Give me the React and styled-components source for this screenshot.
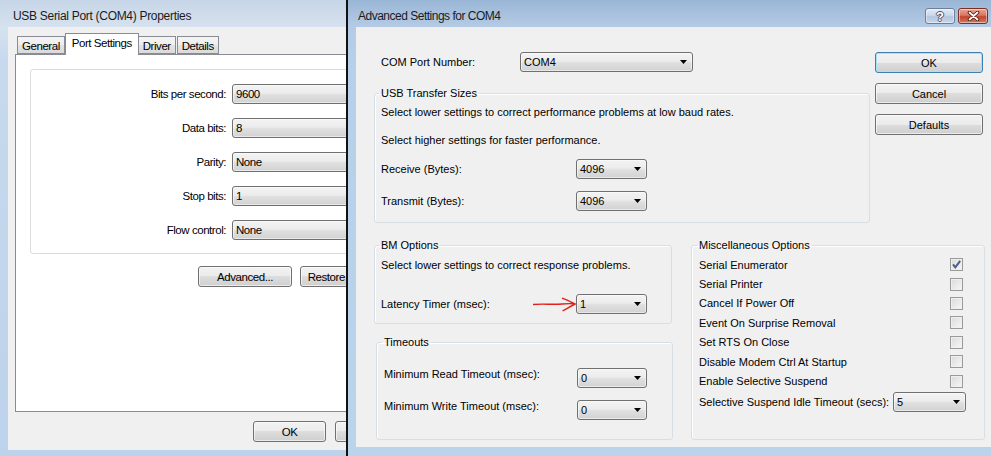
import React from "react";
import styled, { createGlobalStyle } from "styled-components";

const FONT = `"Liberation Sans", Arial, sans-serif`;

const GlobalStyle = createGlobalStyle`
  html, body { margin: 0; padding: 0; }
  body { font-family: ${FONT}; background: #b9d1ea; color: #000; }
  * { box-sizing: border-box; }
`;

const Desktop = styled.div`
  position: relative;
  width: 991px;
  height: 456px;
  overflow: hidden;
  background: #b9d1ea;
`;

const Window = styled.div`
  position: absolute;
  top: 0;
  left: ${(p) => p.$left}px;
  width: ${(p) => p.$width}px;
  height: 456px;
  z-index: ${(p) => p.$z};
  display: flex;
  flex-direction: column;
  padding: 0 8px ${(p) => p.$bottom}px 8px;
  border-left: ${(p) => (p.$active ? "2px solid #111" : "none")};
  background: ${(p) =>
    p.$active
      ? "linear-gradient(to bottom, #9ab6d6 0px, #b5cbe5 27px, #b8cfe9 60px, #bcd3ec 100%)"
      : "linear-gradient(to bottom, #c6d5e7 0px, #d6e2ef 27px, #c6d9ee 60px, #bdd3eb 100%)"};
`;

const TitleBar = styled.div`
  height: 27px;
  flex-shrink: 0;
  display: flex;
  align-items: flex-start;
  justify-content: space-between;
  padding-left: ${(p) => p.$pad}px;
`;

const TitleText = styled.div`
  margin-top: 9px;
  font-size: 12px;
  line-height: 14px;
  letter-spacing: ${(p) => p.$spacing}px;
  color: #1b1b1b;
  white-space: nowrap;
`;

const CaptionButtons = styled.div`
  display: flex;
  gap: 3px;
  margin: 8px 3px 0 0;
`;

const CaptionButton = styled.div`
  width: 30px;
  height: 16px;
  border-radius: 3px;
  display: flex;
  align-items: center;
  justify-content: center;
  border: 1px solid ${(p) => (p.$close ? "#7a3125" : "#6b7f9c")};
  background: ${(p) =>
    p.$close
      ? "linear-gradient(#e9a595 0%, #d87561 45%, #c4442d 55%, #d27a60 100%)"
      : "linear-gradient(#e2eaf4 0%, #cad8e8 45%, #b3c6de 55%, #c6d6ea 100%)"};
  box-shadow: inset 0 0 0 1px rgba(255, 255, 255, 0.45);
`;

const HelpGlyph = styled.span`
  font-family: ${FONT};
  font-weight: bold;
  font-size: 13px;
  line-height: 13px;
  color: #fff;
  text-shadow: -1px 0 #3d5272, 1px 0 #3d5272, 0 -1px #3d5272, 0 1px #3d5272;
`;

/* ---------- Left window ---------- */

const LeftClient = styled.div`
  flex: 1;
  display: flex;
  flex-direction: column;
  background: #f0f0f0;
  padding: 6px 7px 8px 7px;
  font-size: 11.5px;
  letter-spacing: -0.45px;
`;

const TabStrip = styled.div`
  display: flex;
  align-items: flex-end;
  height: 21px;
  padding-left: 2px;
  position: relative;
  z-index: 1;
`;

const Tab = styled.div`
  height: ${(p) => (p.$active ? 22 : 18)}px;
  margin: ${(p) => (p.$active ? "0 -1px -1px -1px" : "0 1px 0 0")};
  padding: ${(p) => (p.$active ? "2px 6px 0" : "2px 4px 0")};
  border: 1px solid #898c95;
  border-bottom: ${(p) => (p.$active ? "none" : "1px solid #898c95")};
  background: ${(p) =>
    p.$active ? "#fff" : "linear-gradient(#f4f4f4 0%, #eeeeee 50%, #e4e4e4 50%, #dadada 100%)"};
  line-height: 14px;
  white-space: nowrap;
  position: relative;
  z-index: ${(p) => (p.$active ? 2 : 1)};
`;

const TabPanel = styled.div`
  flex: 1;
  background: #fff;
  border: 1px solid #898c95;
  padding: 14px 14px 0 14px;
  display: flex;
  flex-direction: column;
`;

const PlainGroup = styled.div`
  height: 185px;
  border: 1px solid #dcdcdc;
  border-radius: 3px;
  padding-top: 14px;
  display: flex;
  flex-direction: column;
  gap: 14px;
`;

const SettingRow = styled.div`
  display: flex;
  align-items: center;
  height: 20px;
  gap: 6px;
`;

const SettingLabel = styled.div`
  width: 195px;
  text-align: right;
  white-space: nowrap;
`;

const ButtonRow = styled.div`
  display: flex;
  justify-content: flex-end;
  gap: ${(p) => p.$gap}px;
  margin-top: ${(p) => p.$top}px;
  padding-right: ${(p) => p.$right || 0}px;
`;

/* ---------- Shared controls ---------- */

const Button = styled.div`
  width: ${(p) => p.$w}px;
  height: 21px;
  flex-shrink: 0;
  display: flex;
  align-items: center;
  justify-content: center;
  border: 1px solid ${(p) => (p.$default ? "#3c7fb1" : "#707070")};
  border-radius: 3px;
  background: linear-gradient(#f2f2f2 0%, #ebebeb 50%, #dddddd 50%, #cfcfcf 100%);
  box-shadow: inset 0 0 0 1px ${(p) => (p.$default ? "#a6e3f8" : "rgba(255,255,255,0.6)")};
  white-space: nowrap;
`;

const ComboBox = styled.div`
  width: ${(p) => p.$w}px;
  height: 20px;
  flex-shrink: 0;
  display: flex;
  align-items: center;
  justify-content: space-between;
  padding: 0 5px 0 3px;
  border: 1px solid #707070;
  border-radius: 3px;
  background: linear-gradient(#f3f3f3 0%, #ececec 45%, #dfdfdf 55%, #d2d2d2 100%);
  box-shadow: inset 0 0 0 1px rgba(255, 255, 255, 0.5);
  white-space: nowrap;
`;

const Arrow = () => (
  <svg width="7" height="4" viewBox="0 0 7 4">
    <polygon points="0,0 7,0 3.5,4" fill="#000" />
  </svg>
);

const Combo = ({ w, value, arrow = true }) => (
  <ComboBox $w={w}>
    <span>{value}</span>
    {arrow && <Arrow />}
  </ComboBox>
);

/* ---------- Right window ---------- */

const RightClient = styled.div`
  flex: 1;
  display: flex;
  flex-direction: column;
  background: #f0f0f0;
  padding: 25px 8px 0 17px;
  font-size: 11px;
`;

const TopSection = styled.div`
  display: flex;
  gap: 5px;
`;

const MainColumn = styled.div`
  width: 497px;
  display: flex;
  flex-direction: column;
`;

const ButtonColumn = styled.div`
  width: 108px;
  display: flex;
  flex-direction: column;
  gap: 10px;
`;

const PortRow = styled.div`
  display: flex;
  align-items: center;
  height: 20px;
`;

const PortLabel = styled.div`
  width: 147px;
  padding-left: 8px;
`;

const GroupBox = styled.fieldset`
  margin: ${(p) => p.$margin || "0"};
  min-width: 0;
  width: ${(p) => (p.$w ? `${p.$w}px` : "auto")};
  border: 1px solid #d5dfe5;
  border-radius: 3px;
  padding: 0 ${(p) => p.$padRight ?? 6}px ${(p) => p.$padBottom}px ${(p) => p.$padLeft ?? 6}px;
  box-shadow: inset 1px 1px 0 #fff;
`;

const Legend = styled.legend`
  padding: 0 2px;
  margin-left: -2px;
  line-height: 14px;
  font-size: 11px;
`;

const Text = styled.div`
  line-height: 14px;
  margin-top: ${(p) => p.$top}px;
  white-space: nowrap;
`;

const FieldRow = styled.div`
  display: flex;
  align-items: ${(p) => (p.$raised ? "flex-start" : "center")};
  height: 20px;
  margin-top: ${(p) => p.$top}px;
`;

const FieldLabel = styled.div`
  width: ${(p) => p.$w}px;
  line-height: ${(p) => (p.$raised ? "12px" : "14px")};
  white-space: nowrap;
`;

const BottomSection = styled.div`
  display: grid;
  grid-template-columns: 299px 294px;
  column-gap: 18px;
  margin: 15px -2px 0 1px;
`;

const StackColumn = styled.div`
  display: flex;
  flex-direction: column;
`;

const OptionList = styled.div`
  margin-top: 3px;
  display: flex;
  flex-direction: column;
`;

const OptionRow = styled.div`
  height: 19.4px;
  display: flex;
  align-items: center;
  justify-content: space-between;
  white-space: nowrap;
`;

const ComboRow = styled.div`
  margin-top: 1px;
  height: 20px;
  display: flex;
  align-items: center;
  justify-content: space-between;
  white-space: nowrap;
`;

const CheckBox = styled.span`
  width: 13px;
  height: 13px;
  flex-shrink: 0;
  margin-right: 3px;
  border: 1px solid #9a9a9a;
  background: linear-gradient(135deg, #dadada 0%, #f7f7f7 100%);
  box-shadow: inset 0 0 0 1px #efefef;
  display: flex;
  align-items: center;
  justify-content: center;
`;

const Check = ({ checked }) => (
  <CheckBox>
    {checked && (
      <svg width="11" height="11" viewBox="0 0 11 11">
        <path d="M2 5.4 L4.3 8.3 L9.2 1.8" fill="none" stroke="#4a5f92" strokeWidth="2" />
      </svg>
    )}
  </CheckBox>
);

const RedArrow = () => (
  <svg width="44" height="16" viewBox="0 0 44 16" style={{ flexShrink: 0 }}>
    <path d="M1 8.5 C10 7.5 20 8.8 30 8 S38 7.6 43 8" fill="none" stroke="#e3201b" strokeWidth="1.4" />
    <path d="M30 2.2 C35 4 39 6 43 8 C39 10 35 12.5 30.5 15" fill="none" stroke="#e3201b" strokeWidth="1.4" />
  </svg>
);

const options = [
  ["Serial Enumerator", true],
  ["Serial Printer", false],
  ["Cancel If Power Off", false],
  ["Event On Surprise Removal", false],
  ["Set RTS On Close", false],
  ["Disable Modem Ctrl At Startup", false],
  ["Enable Selective Suspend", false],
];

const portSettings = [
  ["Bits per second:", "9600"],
  ["Data bits:", "8"],
  ["Parity:", "None"],
  ["Stop bits:", "1"],
  ["Flow control:", "None"],
];

export default function App() {
  return (
    <>
      <GlobalStyle />
      <Desktop>
        <Window $left={0} $width={424} $z={1} $bottom={6}>
          <TitleBar $pad={5}>
            <TitleText $spacing={-0.3}>USB Serial Port (COM4) Properties</TitleText>
          </TitleBar>
          <LeftClient>
            <TabStrip>
              <Tab>General</Tab>
              <Tab $active>Port Settings</Tab>
              <Tab>Driver</Tab>
              <Tab>Details</Tab>
            </TabStrip>
            <TabPanel>
              <PlainGroup>
                {portSettings.map(([label, value]) => (
                  <SettingRow key={label}>
                    <SettingLabel>{label}</SettingLabel>
                    <Combo w={150} value={value} />
                  </SettingRow>
                ))}
              </PlainGroup>
              <ButtonRow $gap={8} $top={12}>
                <Button $w={94}>Advanced...</Button>
                <Button $w={94}>Restore Defaults</Button>
              </ButtonRow>
            </TabPanel>
            <ButtonRow $gap={9} $top={9} $right={1}>
              <Button $w={73}>OK</Button>
              <Button $w={73}>Cancel</Button>
            </ButtonRow>
          </LeftClient>
        </Window>

        <Window $left={346} $width={653} $z={2} $bottom={9} $active>
          <TitleBar $pad={2}>
            <TitleText $spacing={-0.5}>Advanced Settings for COM4</TitleText>
            <CaptionButtons>
              <CaptionButton>
                <HelpGlyph>?</HelpGlyph>
              </CaptionButton>
              <CaptionButton $close>
                <svg width="13" height="10" viewBox="0 0 13 10">
                  <path d="M2.5 1.5 L10.5 8.5 M10.5 1.5 L2.5 8.5" stroke="#4a1a12" strokeWidth="3.6" strokeLinecap="round" />
                  <path d="M2.5 1.5 L10.5 8.5 M10.5 1.5 L2.5 8.5" stroke="#fff" strokeWidth="1.8" strokeLinecap="round" />
                </svg>
              </CaptionButton>
            </CaptionButtons>
          </TitleBar>
          <RightClient>
            <TopSection>
              <MainColumn>
                <PortRow>
                  <PortLabel>COM Port Number:</PortLabel>
                  <Combo w={173} value="COM4" />
                </PortRow>
                <GroupBox $margin="14px 0 0 1px" $padBottom={11}>
                  <Legend>USB Transfer Sizes</Legend>
                  <Text $top={5}>Select lower settings to correct performance problems at low baud rates.</Text>
                  <Text $top={14}>Select higher settings for faster performance.</Text>
                  <FieldRow $top={12}>
                    <FieldLabel $w={195}>Receive (Bytes):</FieldLabel>
                    <Combo w={71} value="4096" />
                  </FieldRow>
                  <FieldRow $top={12}>
                    <FieldLabel $w={195}>Transmit (Bytes):</FieldLabel>
                    <Combo w={71} value="4096" />
                  </FieldRow>
                </GroupBox>
              </MainColumn>
              <ButtonColumn>
                <Button $w={108} $default>OK</Button>
                <Button $w={108}>Cancel</Button>
                <Button $w={108}>Defaults</Button>
              </ButtonColumn>
            </TopSection>

            <BottomSection>
              <StackColumn>
                <GroupBox $w={298} $padBottom={9}>
                  <Legend>BM Options</Legend>
                  <Text $top={6}>Select lower settings to correct response problems.</Text>
                  <FieldRow $top={22}>
                    <FieldLabel $w={151}>Latency Timer (msec):</FieldLabel>
                    <RedArrow />
                    <Combo w={71} value="1" />
                  </FieldRow>
                </GroupBox>
                <GroupBox $w={297} $margin="11px 0 0 2px" $padLeft={7} $padBottom={19}>
                  <Legend>Timeouts</Legend>
                  <FieldRow $top={19} $raised>
                    <FieldLabel $w={193} $raised>Minimum Read Timeout (msec):</FieldLabel>
                    <Combo w={70} value="0" />
                  </FieldRow>
                  <FieldRow $top={12} $raised>
                    <FieldLabel $w={193} $raised>Minimum Write Timeout (msec):</FieldLabel>
                    <Combo w={70} value="0" />
                  </FieldRow>
                </GroupBox>
              </StackColumn>

              <GroupBox $padLeft={7} $padRight={18} $padBottom={27}>
                <Legend>Miscellaneous Options</Legend>
                <OptionList>
                  {options.map(([label, checked]) => (
                    <OptionRow key={label}>
                      <span>{label}</span>
                      <Check checked={checked} />
                    </OptionRow>
                  ))}
                  <ComboRow>
                    <span>Selective Suspend Idle Timeout (secs):</span>
                    <Combo w={73} value="5" />
                  </ComboRow>
                </OptionList>
              </GroupBox>
            </BottomSection>
          </RightClient>
        </Window>
      </Desktop>
    </>
  );
}
